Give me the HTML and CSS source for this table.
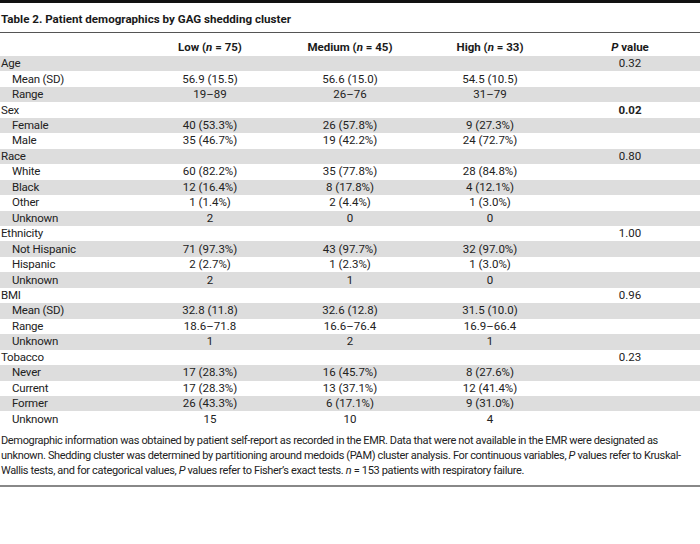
FILE: index.html
```html
<!DOCTYPE html>
<html lang="en">
<head>
<meta charset="utf-8">
<title>Table 2</title>
<link rel="stylesheet" href="styles.css">
</head>
<body>
<div class="page">
  <div class="top-bar"></div>
  <h1 class="title">Table 2. Patient demographics by GAG shedding cluster</h1>
  <table class="data">
    <colgroup>
      <col class="c-label"><col class="c-num"><col class="c-num"><col class="c-num"><col class="c-num">
    </colgroup>
    <thead>
      <tr>
        <th class="lbl"></th>
        <th>Low (<i>n</i> = 75)</th>
        <th>Medium (<i>n</i> = 45)</th>
        <th>High (<i>n</i> = 33)</th>
        <th><i>P</i> value</th>
      </tr>
    </thead>
    <tbody>
      <tr class="g"><td class="lbl">Age</td><td></td><td></td><td></td><td class="p">0.32</td></tr>
      <tr><td class="lbl sub">Mean (SD)</td><td>56.9 (15.5)</td><td>56.6 (15.0)</td><td>54.5 (10.5)</td><td class="p"></td></tr>
      <tr class="g"><td class="lbl sub">Range</td><td>19–89</td><td>26–76</td><td>31–79</td><td class="p"></td></tr>
      <tr><td class="lbl">Sex</td><td></td><td></td><td></td><td class="p"><b>0.02</b></td></tr>
      <tr class="g"><td class="lbl sub">Female</td><td>40 (53.3%)</td><td>26 (57.8%)</td><td>9 (27.3%)</td><td class="p"></td></tr>
      <tr><td class="lbl sub">Male</td><td>35 (46.7%)</td><td>19 (42.2%)</td><td>24 (72.7%)</td><td class="p"></td></tr>
      <tr class="g"><td class="lbl">Race</td><td></td><td></td><td></td><td class="p">0.80</td></tr>
      <tr><td class="lbl sub">White</td><td>60 (82.2%)</td><td>35 (77.8%)</td><td>28 (84.8%)</td><td class="p"></td></tr>
      <tr class="g"><td class="lbl sub">Black</td><td>12 (16.4%)</td><td>8 (17.8%)</td><td>4 (12.1%)</td><td class="p"></td></tr>
      <tr><td class="lbl sub">Other</td><td>1 (1.4%)</td><td>2 (4.4%)</td><td>1 (3.0%)</td><td class="p"></td></tr>
      <tr class="g"><td class="lbl sub">Unknown</td><td>2</td><td>0</td><td>0</td><td class="p"></td></tr>
      <tr><td class="lbl">Ethnicity</td><td></td><td></td><td></td><td class="p">1.00</td></tr>
      <tr class="g"><td class="lbl sub">Not Hispanic</td><td>71 (97.3%)</td><td>43 (97.7%)</td><td>32 (97.0%)</td><td class="p"></td></tr>
      <tr><td class="lbl sub">Hispanic</td><td>2 (2.7%)</td><td>1 (2.3%)</td><td>1 (3.0%)</td><td class="p"></td></tr>
      <tr class="g"><td class="lbl sub">Unknown</td><td>2</td><td>1</td><td>0</td><td class="p"></td></tr>
      <tr><td class="lbl">BMI</td><td></td><td></td><td></td><td class="p">0.96</td></tr>
      <tr class="g"><td class="lbl sub">Mean (SD)</td><td>32.8 (11.8)</td><td>32.6 (12.8)</td><td>31.5 (10.0)</td><td class="p"></td></tr>
      <tr><td class="lbl sub">Range</td><td>18.6–71.8</td><td>16.6–76.4</td><td>16.9–66.4</td><td class="p"></td></tr>
      <tr class="g"><td class="lbl sub">Unknown</td><td>1</td><td>2</td><td>1</td><td class="p"></td></tr>
      <tr><td class="lbl">Tobacco</td><td></td><td></td><td></td><td class="p">0.23</td></tr>
      <tr class="g"><td class="lbl sub">Never</td><td>17 (28.3%)</td><td>16 (45.7%)</td><td>8 (27.6%)</td><td class="p"></td></tr>
      <tr><td class="lbl sub">Current</td><td>17 (28.3%)</td><td>13 (37.1%)</td><td>12 (41.4%)</td><td class="p"></td></tr>
      <tr class="g"><td class="lbl sub">Former</td><td>26 (43.3%)</td><td>6 (17.1%)</td><td>9 (31.0%)</td><td class="p"></td></tr>
      <tr><td class="lbl sub">Unknown</td><td>15</td><td>10</td><td>4</td><td class="p"></td></tr>
    </tbody>
  </table>
  <p class="note">Demographic information was obtained by patient self-report as recorded in the EMR. Data that were not available in the EMR were designated as<br>unknown. Shedding cluster was determined by partitioning around medoids (PAM) cluster analysis. For continuous variables, <i>P</i> values refer to Kruskal-<br>Wallis tests, and for categorical values, <i>P</i> values refer to Fisher’s exact tests. <i>n</i> = 153 patients with respiratory failure.</p>
</div>
</body>
</html>
```

FILE: styles.css
```css
* { box-sizing: border-box; }
html, body { margin: 0; padding: 0; background: #ffffff; }
body {
  font-family: Roboto, "Liberation Sans", sans-serif;
  color: #222222;
  font-size: 11.5px;
}
.page { width: 700px; }
.top-bar { height: 3px; background: #111111; }
.title {
  margin: 0;
  padding: 7.5px 0 5px 1px;
  font-size: 11.6px;
  line-height: 16px;
  font-weight: 700;
  color: #1a1a1a;
  border-bottom: 1.5px solid #555555;
}
.data {
  width: 700px;
  border-collapse: collapse;
  table-layout: fixed;
}
.c-label, .c-num { width: 140px; }
.data th {
  padding: 7px 0 1.5px;
  line-height: 15px;
  font-weight: 700;
  text-align: center;
  color: #1a1a1a;
}
.data td {
  padding: 0;
  height: 15.46px;
  line-height: 15px;
  text-align: center;
  white-space: nowrap;
}
.data .lbl { text-align: left; padding-left: 1px; letter-spacing: -0.2px; }
.data .sub { padding-left: 12px; }
.data .g td { background: #dddddd; }
.data td.p { text-align: center; }
.note {
  margin: 0;
  padding: 6.5px 0 7px 1px;
  font-size: 11px;
  letter-spacing: -0.35px;
  line-height: 15px;
  white-space: nowrap;
  border-bottom: 2px solid #888888;
}
```
